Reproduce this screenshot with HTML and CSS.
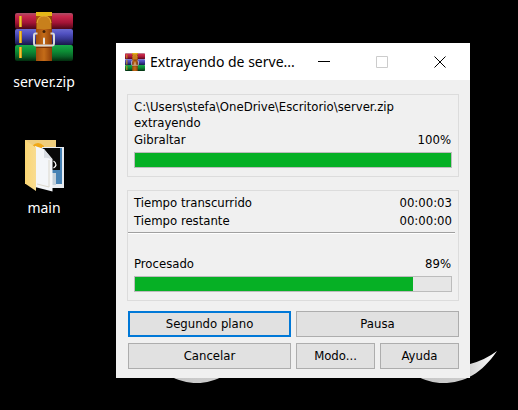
FILE: index.html
```html
<!DOCTYPE html>
<html lang="es">
<head>
<meta charset="utf-8">
<title>Extrayendo de server.zip</title>
<link rel="stylesheet" href="styles.css">
</head>
<body>
<svg class="defs" aria-hidden="true">
  <defs>
    <linearGradient id="red" x1="0" y1="0" x2="0" y2="1"><stop offset="0" stop-color="#a85068"/><stop offset=".2" stop-color="#c8284c"/><stop offset=".6" stop-color="#a41436"/><stop offset="1" stop-color="#4c0818"/></linearGradient>
    <linearGradient id="blue" x1="0" y1="0" x2="0" y2="1"><stop offset="0" stop-color="#6a6ad0"/><stop offset=".3" stop-color="#5050c0"/><stop offset=".6" stop-color="#383894"/><stop offset="1" stop-color="#181848"/></linearGradient>
    <linearGradient id="green" x1="0" y1="0" x2="0" y2="1"><stop offset="0" stop-color="#18a848"/><stop offset=".4" stop-color="#0c8c34"/><stop offset=".7" stop-color="#0a6428"/><stop offset="1" stop-color="#022c0e"/></linearGradient>
    <linearGradient id="strap" x1="0" y1="0" x2="1" y2="0"><stop offset="0" stop-color="#a04c0c"/><stop offset=".5" stop-color="#c46c18"/><stop offset="1" stop-color="#8c3c08"/></linearGradient>
    <linearGradient id="gold" x1="0" y1="0" x2="1" y2="0"><stop offset="0" stop-color="#d08c10"/><stop offset=".5" stop-color="#f0c838"/><stop offset="1" stop-color="#c07c08"/></linearGradient>
    <linearGradient id="folder" x1="0" y1="0" x2="1" y2="0"><stop offset="0" stop-color="#fbd672"/><stop offset="1" stop-color="#f8dc92"/></linearGradient>
    <linearGradient id="wing" x1="0" y1="0" x2="1" y2="0"><stop offset="0" stop-color="#c4c4c4"/><stop offset=".7" stop-color="#cccccc"/><stop offset="1" stop-color="#ffffff"/></linearGradient>
    <symbol id="archive" viewBox="0 0 58 49">
      <rect x="0" y="1" width="58" height="16" rx="2" fill="url(#red)"/>
      <rect x="0" y="17" width="58" height="16" rx="2" fill="url(#blue)"/>
      <rect x="0" y="33" width="58" height="16" rx="2" fill="url(#green)"/>
      <path d="M4 4h3v11H4zM4 19h3v12H4zM4 35h3v11H4z" fill="url(#gold)"/>
      <path d="M21 0h16v49H21z" fill="url(#strap)"/>
      <path d="M21 0h16v4H21z" fill="#e4b818"/>
      <path d="M22 17v-7q0-6 7-6t7 6v7z" fill="#c8801c"/>
      <path d="M22 11q1-7 7-7t7 7" fill="none" stroke="#e8ac30"/>
      <circle cx="29" cy="19.500" r="1.500" fill="#42220a"/>
      <path d="M22.500 21.500h-2q-1.500 0-1.500 2V31q0 2.500 2 2.500h16q2 0 2-2.500v-7.500q0-2-1.500-2h-2" fill="none" stroke="#d8d8d8" stroke-width="2"/>
      <path d="M29 26.500v5" stroke="#e8e8e8" stroke-width="2" stroke-linecap="round"/>
      <path d="M21 35h16v1H21z" fill="#7a3408"/>
    </symbol>
  </defs>
</svg>
<svg class="wallpaper" viewBox="0 0 518 410" preserveAspectRatio="xMinYMin slice" aria-hidden="true">
  <path d="M143 351C158 373 178 383 197 383C215 383 235 373 250 351z" fill="url(#wing)"/>
  <path d="M390 351C405 373 425 383 443 383C465 383 482 373 497 351Q485 360 470 364Q430 366 390 351z" fill="url(#wing)"/>
</svg>
<main class="desktop">
  <nav class="shortcuts" aria-label="Escritorio">
    <a class="shortcut" href="#server">
      <svg class="zip-icon" aria-hidden="true"><use href="#archive"/></svg>
      <span>server.zip</span>
    </a>
    <a class="shortcut" href="#main">
      <svg class="folder-icon" viewBox="0 0 39 52" aria-hidden="true">
        <path d="M0 0h31v44H0z" fill="#efcd7c"/>
        <path d="M7 6q6-6 12 0v5H7z" fill="#f0a818"/>
        <path d="M17 7h22v41H17z" fill="#e9edf2"/>
        <path d="M17 8h20v36H17z" fill="#4782b4"/>
        <path d="M18 8h17v22H18z" fill="#080808"/>
        <path d="M28.500 21q2 1 2.500 4-.5 2-2.500 3" fill="none" stroke="#fff" stroke-width="1.300"/>
        <path d="M26 33h5v12h-5z" fill="#c4d0da"/>
        <path d="M10 6l9 3 8.500 10v32.500L10 47z" fill="#f4f6f9"/>
        <path d="M24 20v27l-12-3" fill="none" stroke="#dcd8cc"/>
        <path d="M19 9l8.500 11q-5-3-8.500-2z" fill="#d9dde3"/>
        <path d="M0 0l11 7.500V51L0 43.500z" fill="url(#folder)"/>
      </svg>
      <span>main</span>
    </a>
  </nav>

  <section class="window" aria-labelledby="title">
    <header class="titlebar">
      <svg class="app-icon" aria-hidden="true" viewBox="0 0 58 49" preserveAspectRatio="none"><use href="#archive"/></svg>
      <h1 id="title">Extrayendo de serve...</h1>
      <button class="caption" aria-label="Minimizar"><svg viewBox="0 0 12 12"><path d="M0 5.500h12"/></svg></button>
      <button class="caption" aria-label="Maximizar" disabled><svg viewBox="0 0 12 12"><path d="M.5.500h11v11H.5z"/></svg></button>
      <button class="caption" aria-label="Cerrar"><svg viewBox="0 0 12 12"><path d="M.5.500l11 11M11.500.500l-11 11"/></svg></button>
    </header>
    <div class="content">
      <div class="group file">
        <p>C:\Users\stefa\OneDrive\Escritorio\server.zip</p>
        <p>extrayendo</p>
        <div class="row percent"><label for="file-progress">Gibraltar</label><span>100%</span></div>
        <progress id="file-progress" value="100" max="100"></progress>
      </div>
      <div class="group total">
        <div class="row"><span>Tiempo transcurrido</span><span>00:00:03</span></div>
        <div class="row"><span>Tiempo restante</span><span>00:00:00</span></div>
        <hr>
        <div class="row percent"><label for="total-progress">Procesado</label><span>89%</span></div>
        <progress id="total-progress" value="88" max="100"></progress>
      </div>
      <div class="actions">
        <button class="wide primary">Segundo plano</button>
        <button class="wide">Pausa</button>
        <button class="wide">Cancelar</button>
        <button>Modo...</button>
        <button>Ayuda</button>
      </div>
    </div>
  </section>
</main>
</body>
</html>
```
FILE: styles.css
```css
* { box-sizing: border-box; }

body {
  margin: 0;
  background: #000;
  color: #000;
  font: 13px/16px "DejaVu Sans Condensed", Tahoma, "DejaVu Sans", sans-serif;
}

h1, p { margin: 0; }

.defs { position: absolute; width: 0; height: 0; }

.wallpaper {
  position: absolute;
  inset: 0;
  width: 100%;
  height: 100%;
}

.desktop {
  position: relative;
  display: flex;
  min-height: 100vh;
  padding-right: 48px;
}

.shortcuts {
  display: flex;
  flex: 0 0 116px;
  flex-direction: column;
  align-items: flex-start;
  gap: 48px;
  padding-top: 12px;
}

.shortcut {
  display: flex;
  flex-direction: column;
  align-items: center;
  gap: 11px;
  width: 88px;
  color: #fff;
  font: 14px/20px "Noto Sans", "Open Sans", sans-serif;
  text-decoration: none;
}

.zip-icon { width: 58px; height: 49px; }
.folder-icon { width: 39px; height: 52px; }
.shortcut + .shortcut { gap: 6px; }

.window {
  flex: 1;
  align-self: flex-start;
  min-width: 0;
  margin-top: 43px;
  background: #f0f0f0;
}

.titlebar {
  display: flex;
  align-items: center;
  height: 37px;
  padding: 0 1px 0 9px;
  background: #fff;
}

.app-icon { flex: none; width: 20px; height: 18px; }

h1 {
  flex: 1;
  min-width: 0;
  margin-left: 5px;
  font: 14px/20px "Noto Sans", "Open Sans", sans-serif;
  white-space: nowrap;
}

.caption {
  display: grid;
  flex: none;
  place-items: center;
  width: 58px;
  height: 37px;
  padding: 0;
  border: 0;
  background: none;
}

.caption svg {
  width: 12px;
  height: 12px;
  fill: none;
  stroke: #000;
}

.caption:disabled svg { stroke: #ccc; }

.content { padding: 14px 11px 9px; }

.group {
  padding: 4px 6px 8px;
  border: 1px solid #dcdcdc;
}

.total {
  margin-top: 13px;
  padding-top: 3px;
}

.row {
  display: flex;
  justify-content: space-between;
  line-height: 18px;
}

.percent { padding-right: 1px; }

hr {
  height: 2px;
  margin: 2px -3px 21px -6px;
  border: 0;
  border-top: 1px solid #a0a0a0;
  border-bottom: 1px solid #fff;
}

progress {
  display: block;
  width: 100%;
  height: 16px;
  margin-top: 3px;
  border: 1px solid #bcbcbc;
  background: #e6e6e6;
  appearance: none;
}

progress::-webkit-progress-bar { background: #e6e6e6; }
progress::-webkit-progress-value { background: #06b025; }

.actions {
  display: grid;
  grid-template-columns: repeat(4, 1fr);
  gap: 6px 5px;
  margin: 10px 0 0 1px;
}

.actions button {
  height: 26px;
  padding: 0;
  border: 1px solid #adadad;
  background: #e1e1e1;
  color: #000;
  font: inherit;
}

.actions .wide { grid-column: span 2; }
.actions .primary { border: 2px solid #0078d7; }
```
